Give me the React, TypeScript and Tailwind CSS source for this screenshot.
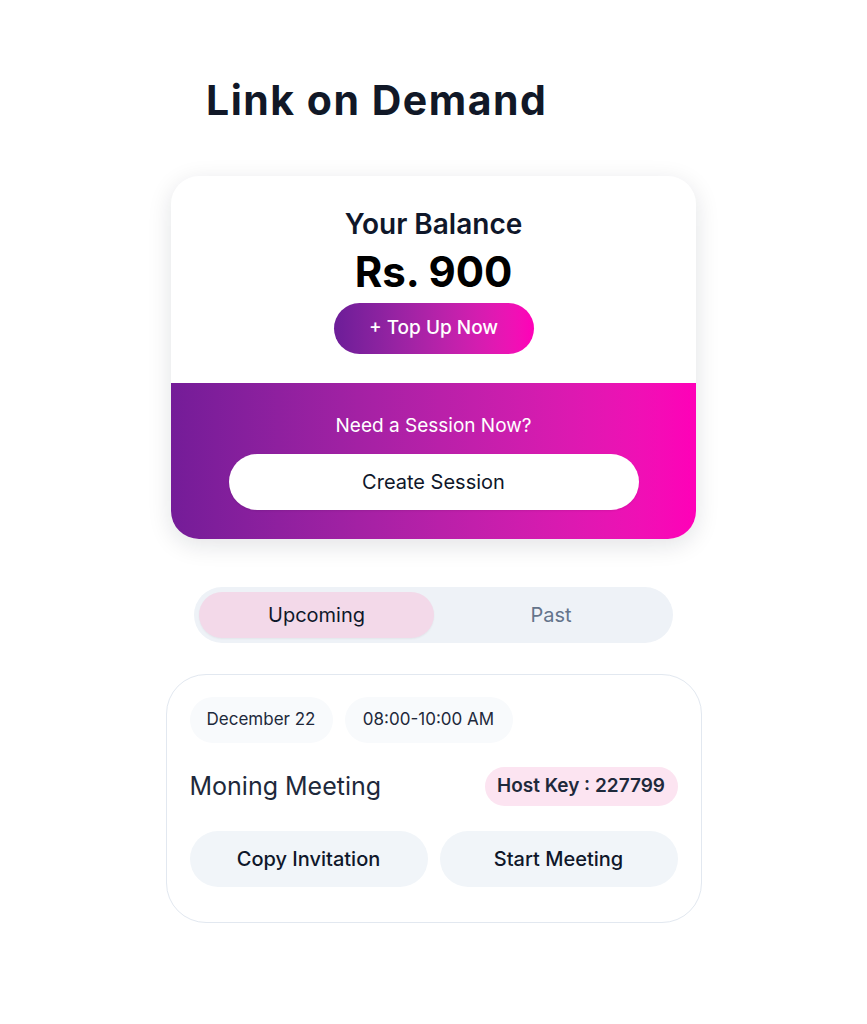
import React from "react";

export default function App() {
  return (
    <div
      className="min-h-[1024px] w-full bg-white"
      style={{ fontFamily: 'Inter, "Noto Sans", sans-serif' }}
    >
      <div className="mx-auto flex w-[536px] flex-col items-center pt-[76px]">
        <h1 className="w-[525px] pl-[35px] text-[41px] font-bold leading-[48px] tracking-[1.5px] text-[#111827]">
          Link on Demand
        </h1>

        {/* Balance card */}
        <div className="mt-[52px] w-[525px] overflow-hidden rounded-[28px] bg-white shadow-[0_6px_24px_rgba(15,23,42,0.12)]">
          <div className="flex flex-col items-center pt-[31px] pb-[29px]">
            <div className="text-[28px] font-semibold leading-[34px] text-[#0f172a]">
              Your Balance
            </div>
            <div className="mt-[6px] text-[42px] font-bold leading-[50px] text-black">
              Rs. 900
            </div>
            <button className="mt-[6px] flex h-[51px] w-[200px] items-center justify-center rounded-full bg-gradient-to-r from-[#6c1d98] to-[#ff00b8] text-[19px] font-medium text-white">
              + Top Up Now
            </button>
          </div>
          <div className="flex flex-col items-center bg-gradient-to-r from-[#741c98] to-[#ff00b8] pt-[31px] pb-[29px]">
            <div className="text-[19px] leading-[24px] text-white">
              Need a Session Now?
            </div>
            <button className="mt-[16px] flex h-[56px] w-[410px] items-center justify-center rounded-full bg-white text-[20px] text-[#0f172a] shadow-[0_1px_2px_rgba(0,0,0,0.08)]">
              Create Session
            </button>
          </div>
        </div>

        {/* Tabs */}
        <div className="mt-[48px] flex h-[56px] w-[479px] items-center rounded-full bg-[#eef2f7] p-[5px]">
          <div className="flex h-full w-[235px] items-center justify-center rounded-full bg-[#f3d9e9] text-[20px] text-[#0f172a] shadow-[0_1px_2px_rgba(0,0,0,0.05)]">
            Upcoming
          </div>
          <div className="flex h-full flex-1 items-center justify-center text-[20px] text-[#64748b]">
            Past
          </div>
        </div>

        {/* Meeting card */}
        <div className="mt-[31px] w-[536px] rounded-[40px] border border-[#e2e8f0] bg-white px-[23px] pt-[22px] pb-[35px]">
          <div className="flex gap-[12px]">
            <div className="flex h-[46px] w-[143px] items-center justify-center rounded-full bg-[#f8fafc] text-[17px] text-[#1e293b]">
              December 22
            </div>
            <div className="flex h-[46px] w-[168px] items-center justify-center rounded-full bg-[#f8fafc] text-[17px] text-[#1e293b]">
              08:00-10:00 AM
            </div>
          </div>
          <div className="mt-[24px] flex items-center justify-between">
            <div className="text-[25px] leading-[39px] text-[#1e293b]">
              Moning Meeting
            </div>
            <div className="flex h-[39px] w-[193px] items-center justify-center rounded-full bg-[#fce4f1] text-[19px] font-semibold text-[#1e293b]">
              Host Key : 227799
            </div>
          </div>
          <div className="mt-[25px] flex gap-[12px]">
            <button className="flex h-[56px] flex-1 items-center justify-center rounded-full bg-[#f1f5f9] text-[20px] font-medium text-[#0f172a]">
              Copy Invitation
            </button>
            <button className="flex h-[56px] flex-1 items-center justify-center rounded-full bg-[#f1f5f9] text-[20px] font-medium text-[#0f172a]">
              Start Meeting
            </button>
          </div>
        </div>
      </div>
    </div>
  );
}
